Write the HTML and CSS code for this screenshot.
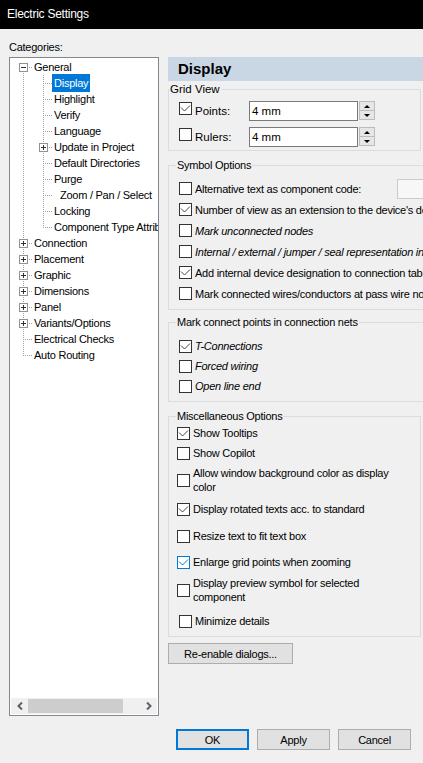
FILE: index.html
```html
<!DOCTYPE html>
<html>
<head>
<meta charset="utf-8">
<title>Electric Settings</title>
<link rel="stylesheet" href="styles.css">
</head>
<body>
<div class="titlebar">Electric Settings</div>
<div class="main">
  <div class="left">
    <div class="cat-label">Categories:</div>
    <div class="tree">
      <div class="tree-rows">
        <div class="row"><div class="cell d"><span class="box minus"></span></div><span class="txt">General</span></div>
        <div class="row"><div class="cell v"></div><div class="cell t"></div><span class="txt sel">Display</span></div>
        <div class="row"><div class="cell v"></div><div class="cell t"></div><span class="txt">Highlight</span></div>
        <div class="row"><div class="cell v"></div><div class="cell t"></div><span class="txt">Verify</span></div>
        <div class="row"><div class="cell v"></div><div class="cell t"></div><span class="txt">Language</span></div>
        <div class="row"><div class="cell v"></div><div class="cell t"><span class="box plus"></span></div><span class="txt">Update in Project</span></div>
        <div class="row"><div class="cell v"></div><div class="cell t"></div><span class="txt">Default Directories</span></div>
        <div class="row"><div class="cell v"></div><div class="cell t"></div><span class="txt">Purge</span></div>
        <div class="row"><div class="cell v"></div><div class="cell t"></div><span class="txt indent">Zoom / Pan / Select</span></div>
        <div class="row"><div class="cell v"></div><div class="cell t"></div><span class="txt">Locking</span></div>
        <div class="row"><div class="cell v"></div><div class="cell l"></div><span class="txt">Component Type Attributes</span></div>
        <div class="row"><div class="cell t"><span class="box plus"></span></div><span class="txt">Connection</span></div>
        <div class="row"><div class="cell t"><span class="box plus"></span></div><span class="txt">Placement</span></div>
        <div class="row"><div class="cell t"><span class="box plus"></span></div><span class="txt">Graphic</span></div>
        <div class="row"><div class="cell t"><span class="box plus"></span></div><span class="txt">Dimensions</span></div>
        <div class="row"><div class="cell t"><span class="box plus"></span></div><span class="txt">Panel</span></div>
        <div class="row"><div class="cell t"><span class="box plus"></span></div><span class="txt">Variants/Options</span></div>
        <div class="row"><div class="cell t"></div><span class="txt">Electrical Checks</span></div>
        <div class="row"><div class="cell l"></div><span class="txt">Auto Routing</span></div>
      </div>
      <div class="hscroll">
        <div class="sb-arrow"><svg width="6" height="8" viewBox="0 0 6 8"><polyline points="5,0.5 1.5,4 5,7.5" fill="none" stroke="#606060" stroke-width="2"/></svg></div>
        <div class="sb-thumb"></div>
        <div class="sb-track"></div>
        <div class="sb-arrow"><svg width="6" height="8" viewBox="0 0 6 8"><polyline points="1,0.5 4.5,4 1,7.5" fill="none" stroke="#606060" stroke-width="2"/></svg></div>
      </div>
    </div>
  </div>

  <div class="right">
    <div class="page-head">Display</div>

    <fieldset class="grp grp-grid">
      <legend>Grid View</legend>
      <div class="grid-rows">
        <div class="grid-row">
          <span class="cb"><svg viewBox="0 0 11 11" width="11" height="11"><polyline points="1,4.5 4.5,8 10,2.5" fill="none" stroke="#444" stroke-width="1"/></svg></span>
          <span class="grid-lbl">Points:</span>
          <div class="spinbox"><span class="spin-input">4 mm</span><span class="spin"><span class="spin-btn"><span class="tri-up"></span></span><span class="spin-btn"><span class="tri-down"></span></span></span></div>
        </div>
        <div class="grid-row">
          <span class="cb"></span>
          <span class="grid-lbl">Rulers:</span>
          <div class="spinbox"><span class="spin-input">4 mm</span><span class="spin"><span class="spin-btn"><span class="tri-up"></span></span><span class="spin-btn"><span class="tri-down"></span></span></span></div>
        </div>
      </div>
    </fieldset>

    <fieldset class="grp grp-wide grp-sym">
      <legend>Symbol Options</legend>
      <div class="sym-rows">
        <div class="opt"><span class="cb"></span><span class="lbl alt-lbl">Alternative text as component code:</span><span class="alt-box"></span></div>
        <div class="opt"><span class="cb"><svg viewBox="0 0 11 11" width="11" height="11"><polyline points="1,4.5 4.5,8 10,2.5" fill="none" stroke="#444" stroke-width="1"/></svg></span><span class="lbl">Number of view as an extension to the device's designation</span></div>
        <div class="opt"><span class="cb"></span><span class="lbl it">Mark unconnected nodes</span></div>
        <div class="opt"><span class="cb"></span><span class="lbl it">Internal / external / jumper / seal representation in the design</span></div>
        <div class="opt"><span class="cb"><svg viewBox="0 0 11 11" width="11" height="11"><polyline points="1,4.5 4.5,8 10,2.5" fill="none" stroke="#444" stroke-width="1"/></svg></span><span class="lbl">Add internal device designation to connection table</span></div>
        <div class="opt"><span class="cb"></span><span class="lbl">Mark connected wires/conductors at pass wire nodes</span></div>
      </div>
    </fieldset>

    <fieldset class="grp grp-wide grp-mark">
      <legend>Mark connect points in connection nets</legend>
      <div class="mark-rows">
        <div class="opt h20"><span class="cb"><svg viewBox="0 0 11 11" width="11" height="11"><polyline points="1,4.5 4.5,8 10,2.5" fill="none" stroke="#444" stroke-width="1"/></svg></span><span class="lbl it">T-Connections</span></div>
        <div class="opt h20"><span class="cb"></span><span class="lbl it">Forced wiring</span></div>
        <div class="opt h20"><span class="cb"></span><span class="lbl it">Open line end</span></div>
      </div>
    </fieldset>

    <fieldset class="grp grp-misc">
      <legend>Miscellaneous Options</legend>
      <div class="misc-rows">
        <div class="mopt"><span class="cb"><svg viewBox="0 0 11 11" width="11" height="11"><polyline points="1,4.5 4.5,8 10,2.5" fill="none" stroke="#444" stroke-width="1"/></svg></span><span class="mlbl">Show Tooltips</span></div>
        <div class="mopt m2"><span class="cb"></span><span class="mlbl">Show Copilot</span></div>
        <div class="mopt m4 two"><span class="cb"></span><span class="mlbl">Allow window background color as display color</span></div>
        <div class="mopt m6"><span class="cb"><svg viewBox="0 0 11 11" width="11" height="11"><polyline points="1,4.5 4.5,8 10,2.5" fill="none" stroke="#444" stroke-width="1"/></svg></span><span class="mlbl">Display rotated texts acc. to standard</span></div>
        <div class="mopt m9"><span class="cb"></span><span class="mlbl">Resize text to fit text box</span></div>
        <div class="mopt m8"><span class="cb cb-focus"><svg viewBox="0 0 11 11" width="11" height="11"><polyline points="1,4.5 4.5,8 10,2.5" fill="none" stroke="#0078d7" stroke-width="1"/></svg></span><span class="mlbl">Enlarge grid points when zooming</span></div>
        <div class="mopt m5 two"><span class="cb"></span><span class="mlbl">Display preview symbol for selected component</span></div>
        <div class="mopt m8 shift"><span class="cb"></span><span class="mlbl">Minimize details</span></div>
      </div>
    </fieldset>

    <div class="btn btn-reenable">Re-enable dialogs...</div>
  </div>
</div>
<div class="footer">
  <div class="btn btn-std btn-default">OK</div>
  <div class="btn btn-std">Apply</div>
  <div class="btn btn-std">Cancel</div>
</div>
</body>
</html>
```
FILE: styles.css
```css
html, body {
  margin: 0;
  padding: 0;
}
body {
  width: 423px;
  height: 763px;
  overflow: hidden;
  background: #f0f0f0;
  font-family: "Liberation Sans", Arial, sans-serif;
  font-size: 11px;
  letter-spacing: -0.25px;
  color: #000;
}

/* title bar */
.titlebar {
  height: 29px;
  line-height: 29px;
  background: #000;
  color: #fff;
  font-size: 12px;
  padding-left: 7px;
}

.main {
  display: flex;
  align-items: flex-start;
}

/* left column: categories tree */
.left {
  flex: none;
  width: 150px;
  padding: 10px 0 0 9px;
}
.cat-label {
  height: 16px;
  line-height: 16px;
  margin-bottom: 2px;
}
.tree {
  box-sizing: border-box;
  width: 150px;
  height: 659px;
  border: 1px solid #828790;
  background: #fff;
  display: flex;
  flex-direction: column;
}
.tree-rows {
  flex: 1;
  overflow: hidden;
  padding: 1px 0 0 3px;
}
.row {
  display: flex;
  height: 16px;
  line-height: 16px;
  white-space: nowrap;
}
.cell {
  flex: none;
  width: 20px;
  height: 16px;
  display: flex;
  align-items: flex-start;
  background-repeat: no-repeat;
}
.cell.v {
  background-image: repeating-linear-gradient(to bottom, #a0a0a0 0 1px, transparent 1px 2px);
  background-size: 1px 16px;
  background-position: 10px 0;
}
.cell.t {
  background-image:
    repeating-linear-gradient(to bottom, #a0a0a0 0 1px, transparent 1px 2px),
    repeating-linear-gradient(to right, #a0a0a0 0 1px, transparent 1px 2px);
  background-size: 1px 16px, 8px 1px;
  background-position: 10px 0, 12px 8px;
}
.cell.l {
  background-image:
    repeating-linear-gradient(to bottom, #a0a0a0 0 1px, transparent 1px 2px),
    repeating-linear-gradient(to right, #a0a0a0 0 1px, transparent 1px 2px);
  background-size: 1px 9px, 8px 1px;
  background-position: 10px 0, 12px 8px;
}
.cell.d {
  background-image:
    repeating-linear-gradient(to bottom, #a0a0a0 0 1px, transparent 1px 2px),
    repeating-linear-gradient(to right, #a0a0a0 0 1px, transparent 1px 2px);
  background-size: 1px 8px, 8px 1px;
  background-position: 10px 8px, 12px 8px;
}
.box {
  box-sizing: border-box;
  width: 9px;
  height: 9px;
  margin: 4px 0 0 6px;
  border: 1px solid #919191;
  background: #fff;
}
.box.minus {
  background:
    linear-gradient(#333, #333) center / 5px 1px no-repeat,
    #fff;
}
.box.plus {
  background:
    linear-gradient(#333, #333) center / 5px 1px no-repeat,
    linear-gradient(#333, #333) center / 1px 5px no-repeat,
    #fff;
}
.txt {
  padding-left: 1px;
}
.txt.indent {
  padding-left: 7px;
}
.txt.sel {
  align-self: flex-start;
  margin: -1px 0 0 -1px;
  padding: 1px 2px;
  background: #0078d7;
  color: #fff;
}

.hscroll {
  flex: none;
  height: 16px;
  margin: 0 1px 1px 1px;
  background: #f0f0f0;
  display: flex;
  align-items: center;
}
.sb-arrow {
  flex: none;
  width: 17px;
  height: 16px;
  display: flex;
  align-items: center;
  justify-content: center;
}
.sb-thumb {
  flex: none;
  width: 95px;
  height: 14px;
  background: #cdcdcd;
}
.sb-track {
  flex: 1;
}

/* right column */
.right {
  flex: none;
  width: 255px;
  margin-left: 9px;
  padding-top: 28px;
}
.page-head {
  box-sizing: border-box;
  width: 270px;
  height: 24px;
  line-height: 24px;
  padding-left: 10px;
  background: #c9d7e5;
  font-size: 15px;
  font-weight: bold;
  letter-spacing: 0;
}

.grp {
  box-sizing: border-box;
  width: 253px;
  min-width: 0;
  margin: 0;
  padding: 0;
  border: 1px solid #dcdcdc;
}
.grp legend {
  padding: 0 1px;
  margin-left: 7px;
  line-height: 14px;
  white-space: nowrap;
}
.grp-wide {
  width: 300px;
}

.grp-grid {
  margin-top: 1px;
}
.grp-grid legend {
  margin-left: 0;
  font-size: 11.5px;
  letter-spacing: 0;
}
.grp-sym {
  margin-top: 7px;
}
.grp-mark {
  margin-top: 5px;
}
.grp-misc {
  margin-top: 7px;
}

/* checkbox */
.cb {
  flex: none;
  box-sizing: border-box;
  width: 13px;
  height: 13px;
  border: 1px solid #333;
  background: #fff;
  display: block;
}
.cb svg {
  display: block;
}
.cb-focus {
  border-color: #0078d7;
}

/* grid view rows */
.grid-rows {
  display: flex;
  flex-direction: column;
  gap: 6px;
  padding: 5px 0 3px 10px;
}
.grid-row {
  display: flex;
  align-items: flex-start;
  height: 20px;
}
.grid-row .cb {
  margin-top: 1px;
}
.grid-lbl {
  box-sizing: border-box;
  width: 57px;
  padding-left: 3px;
  line-height: 20px;
  font-size: 11.5px;
  letter-spacing: 0;
}
.spinbox {
  display: flex;
  align-items: flex-start;
}
.spin-input {
  box-sizing: border-box;
  width: 109px;
  height: 20px;
  line-height: 18px;
  padding-left: 2px;
  border: 1px solid #7a7a7a;
  background: #fff;
  font-size: 11.5px;
  letter-spacing: 0;
}
.spin {
  box-sizing: border-box;
  width: 16px;
  height: 19px;
  margin-left: 1px;
  display: flex;
  flex-direction: column;
}
.spin-btn {
  flex: 1;
  box-sizing: border-box;
  border: 1px solid #bcbcbc;
  background: #e6e6e6;
  display: flex;
  align-items: center;
  justify-content: center;
}
.spin-btn + .spin-btn {
  border-top: 0;
}
.tri-up {
  width: 0;
  height: 0;
  border-left: 3px solid transparent;
  border-right: 3px solid transparent;
  border-bottom: 3px solid #000;
}
.tri-down {
  width: 0;
  height: 0;
  border-left: 3px solid transparent;
  border-right: 3px solid transparent;
  border-top: 3px solid #000;
}

/* option rows */
.sym-rows {
  padding: 6px 0 5px 10px;
}
.mark-rows {
  padding: 7px 0 5px 10px;
}
.opt {
  display: flex;
  align-items: center;
  height: 21px;
  white-space: nowrap;
}
.opt.h20 {
  height: 20px;
}
.lbl {
  padding-left: 3px;
}
.it {
  font-style: italic;
}
.alt-lbl {
  box-sizing: border-box;
  flex: none;
  width: 205px;
}
.alt-box {
  flex: none;
  box-sizing: border-box;
  width: 80px;
  height: 20px;
  border: 1px solid #cccccc;
  background: #f7f7f7;
}

.misc-rows {
  padding: 1px 0 6px 8px;
}
.mopt {
  display: flex;
  align-items: center;
  height: 18px;
}
.mopt.two {
  height: 28px;
}
.mlbl {
  box-sizing: border-box;
  width: 218px;
  padding-left: 3px;
  line-height: 14px;
}
.mopt.shift .cb {
  margin-left: 2px;
}
.m2 { margin-top: 2px; }
.m4 { margin-top: 4px; }
.m5 { margin-top: 5px; }
.m6 { margin-top: 6px; }
.m8 { margin-top: 8px; }
.m9 { margin-top: 9px; }

/* buttons */
.btn {
  box-sizing: border-box;
  height: 21px;
  border: 1px solid #adadad;
  background: #e1e1e1;
  display: flex;
  align-items: center;
  justify-content: center;
  white-space: nowrap;
}
.btn-reenable {
  width: 125px;
  margin-top: 6px;
}
.footer {
  display: flex;
  gap: 8px;
  margin-top: 13px;
  padding-left: 176px;
}
.btn-std {
  width: 73px;
}
.btn-default {
  border: 2px solid #0078d7;
}
```
